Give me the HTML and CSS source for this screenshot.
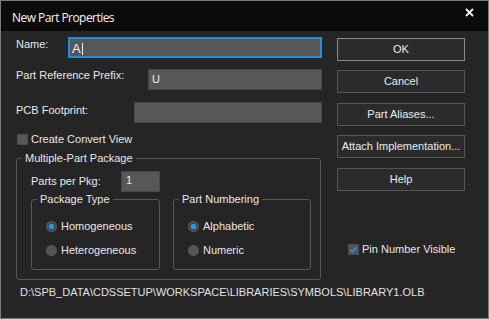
FILE: index.html
```html
<!DOCTYPE html>
<html>
<head>
<meta charset="utf-8">
<link rel="stylesheet" href="styles.css">
</head>
<body>
<div class="window">
  <div class="titlebar">
    <span class="title">New Part Properties</span>
    <span class="close"><svg width="9" height="9" viewBox="0 0 9 9"><path d="M1 1L8 8M8 1L1 8" stroke="#f2f2f2" stroke-width="1.8" fill="none"/></svg></span>
  </div>
  <div class="content">
    <div class="left">
      <div class="row row-name">
        <label class="lbl lbl-name">Name:</label>
        <div class="field focused"><span class="val val-big">A</span><span class="caret"></span></div>
      </div>
      <div class="row row-prefix">
        <label class="lbl lbl-prefix">Part Reference Prefix:</label>
        <div class="field"><span class="val">U</span></div>
      </div>
      <div class="row row-pcb">
        <label class="lbl lbl-pcb">PCB Footprint:</label>
        <div class="field"></div>
      </div>
      <div class="check-row">
        <span class="box"></span><span class="check-text">Create Convert View</span>
      </div>
      <fieldset class="group outer">
        <legend>Multiple-Part Package</legend>
        <div class="outer-body">
          <div class="parts-row">
            <label class="lbl lbl-parts">Parts per Pkg:</label>
            <div class="field small"><span class="val">1</span></div>
          </div>
          <div class="subgroups">
            <fieldset class="group inner inner-type">
              <legend>Package Type</legend>
              <div class="radios">
                <div class="radio-row"><span class="radio checked"></span><span>Homogeneous</span></div>
                <div class="radio-row"><span class="radio"></span><span>Heterogeneous</span></div>
              </div>
            </fieldset>
            <fieldset class="group inner inner-num">
              <legend>Part Numbering</legend>
              <div class="radios">
                <div class="radio-row"><span class="radio checked"></span><span>Alphabetic</span></div>
                <div class="radio-row"><span class="radio"></span><span>Numeric</span></div>
              </div>
            </fieldset>
          </div>
        </div>
      </fieldset>
    </div>
    <div class="right">
      <div class="buttons">
        <button class="btn default">OK</button>
        <button class="btn">Cancel</button>
        <button class="btn gap10">Part Aliases...</button>
        <button class="btn">Attach Implementation...</button>
        <button class="btn gap10">Help</button>
      </div>
      <div class="check-row pin-row">
        <span class="box checked"><svg width="9" height="9" viewBox="0 0 9 9"><path d="M1.5 4.8L3.6 6.8L7.6 2.2" stroke="#1e9bf0" stroke-width="1.3" fill="none"/></svg></span><span class="check-text">Pin Number Visible</span>
      </div>
    </div>
  </div>
  <div class="path">D:\SPB_DATA\CDSSETUP\WORKSPACE\LIBRARIES\SYMBOLS\LIBRARY1.OLB</div>
</div>
</body>
</html>
```

FILE: styles.css
```css
* { box-sizing: border-box; }
html, body { margin: 0; padding: 0; background: #252525; }
body {
  font-family: "Liberation Sans", Arial, sans-serif;
  font-size: 11px;
  line-height: 13px;
  color: #e8e8e8;
}
.window {
  width: 489px;
  height: 319px;
  border: 1px solid #7b7b7b;
  background: #252525;
  overflow: hidden;
}
.titlebar {
  height: 30px;
  background: #0b0b0b;
  display: flex;
  align-items: flex-start;
  justify-content: space-between;
  padding: 9px 14px 0 11px;
}
.title {
  font-family: "Open Sans", "Noto Sans", sans-serif;
  font-size: 12px;
  line-height: 16px;
  color: #f4f4f4;
  letter-spacing: -0.55px;
}
.close {
  display: flex;
  margin-top: -2px;
}
.content {
  display: grid;
  grid-template-columns: 306px 128px;
  column-gap: 15px;
  padding: 6px 0 0 15px;
}
.row {
  display: flex;
  align-items: flex-start;
}
.row-prefix { margin-top: 11px; }
.row-pcb { margin-top: 12px; }
.lbl { display: block; }
.lbl-name { width: 52px; padding-top: 1px; }
.lbl-prefix { width: 132px; }
.lbl-pcb { width: 118px; padding-top: 2px; }
.field {
  flex: 1;
  height: 21px;
  background: #575757;
  border: 1px solid #474747;
  display: flex;
  align-items: flex-start;
  padding: 3px 0 0 3px;
  color: #f0f0f0;
}
.field.focused {
  border: 2px solid #1b8fe6;
  padding: 2px 0 0 2px;
}
.val-big { font-size: 13px; line-height: 15px; }
.caret {
  display: block;
  width: 1px;
  height: 12px;
  margin-top: 2px;
  margin-left: 1px;
  background: #f0f0f0;
}
.check-row {
  display: flex;
  align-items: center;
  margin-top: 10px;
  margin-left: 1px;
  height: 13px;
}
.box {
  width: 11px;
  height: 11px;
  background: #585858;
  border: 1px solid #4c4c4c;
  margin-right: 3px;
  display: flex;
  align-items: center;
  justify-content: center;
}
.box.checked { background: #555; }
.group {
  margin: 0;
  padding: 0;
  border: 1px solid #575757;
  border-radius: 3px;
  min-width: 0;
}
.group legend {
  padding: 0 3px;
  margin-left: 5px;
  line-height: 13px;
}
.outer {
  width: 305px;
  margin-top: 6px;
}
.outer-body {
  padding: 6px 8px 9px 14px;
}
.parts-row {
  display: flex;
  align-items: center;
}
.lbl-parts { width: 90px; }
.field.small {
  flex: none;
  width: 39px;
  padding: 2px 0 0 4px;
}
.subgroups {
  display: flex;
  gap: 13px;
  margin-top: 1px;
}
.inner-type { width: 129px; }
.inner-num { width: 138px; }
.radios {
  padding: 14px 0 12px 14px;
  display: flex;
  flex-direction: column;
  gap: 11px;
}
.radio-row {
  display: flex;
  align-items: center;
  height: 13px;
}
.radio {
  width: 11px;
  height: 11px;
  border-radius: 50%;
  background: #555;
  margin-right: 4px;
  margin-top: -1px;
}
.radio.checked {
  background: radial-gradient(circle, #1a9bf2 0, #1a9bf2 2.6px, #3c3c3c 3.2px, #3c3c3c 3.6px, #555 4.2px);
}
.buttons {
  display: flex;
  flex-direction: column;
  gap: 9px;
  padding-top: 1px;
}
.btn {
  height: 23px;
  width: 128px;
  background: #2b2b2b;
  border: 1px solid #555;
  color: #ececec;
  font-family: "Liberation Sans", Arial, sans-serif;
  font-size: 11px;
  line-height: 13px;
  padding: 0;
  margin: 0;
}
.btn.default { border-color: #8a8a8a; }
.btn.gap10 { margin-top: 1px; }
.pin-row {
  margin-top: 52px;
  margin-left: 11px;
}
.path {
  margin: 6px 0 0 19px;
  color: #e2e2e2;
}
```
